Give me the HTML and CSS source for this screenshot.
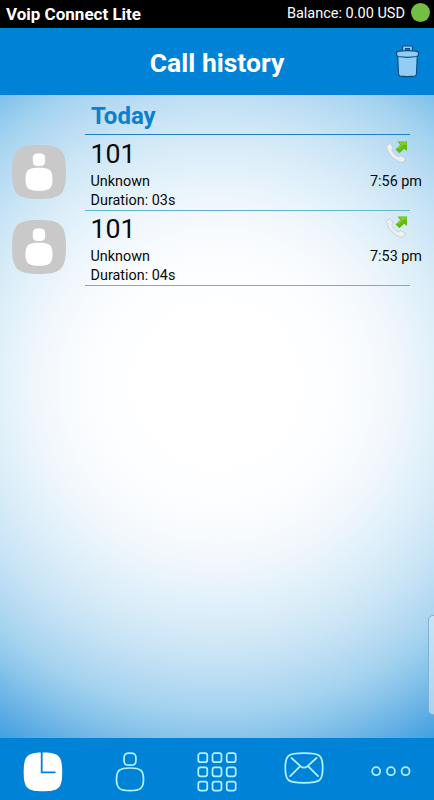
FILE: index.html
```html
<!DOCTYPE html>
<html lang="en">
<head>
<meta charset="UTF-8" />
<meta name="viewport" content="width=device-width, initial-scale=1" />
<title>Voip Connect Lite</title>
<link rel="stylesheet" href="styles.css">
</head>
<body>
  <div class="app">
    <div class="status-bar">
      <span class="app-name">Voip Connect Lite</span>
      <span class="balance">Balance: 0.00 USD</span>
      <span class="online-dot"></span>
    </div>

    <header class="header">
      <h1>Call history</h1>
      <button class="trash" aria-label="Clear history">
        <svg width="26" height="36" viewBox="0 0 26 36" fill="#93cdf5" stroke="#0b4f80" stroke-width="1.2">
          <path d="M2.700 11.500h19.600l-.8 18.500q-.1 1.900-1.800 2.200-7.200 1-14.400 0-1.700-.3-1.800-2.200z" />
          <path d="M7.500 7V3.400q0-1.400 1.400-1.400h7.200q1.400 0 1.400 1.400V7h-3V4.700h-4V7z" />
          <path d="M1.400 9.800q0-2.200 2.200-2.600 8.900-1.300 17.800 0 2.200.4 2.200 2.600 0 2.300-2 2.700-9.100 1.600-18.200 0-2-.4-2-2.700z" />
        </svg>
      </button>
    </header>

    <main class="history">
      <h2 class="day">Today</h2>

      <div class="call">
        <div class="avatar">
          <svg width="54" height="54" viewBox="0 0 54 54">
            <path fill="#c9c9c9" d="M27 0C48 0 54 4 54 27S48 54 27 54 0 50 0 27 6 0 27 0z" />
            <path fill="#fff" d="M27 8.500c5 0 6.200 1.200 6.200 6.200S32 21 27 21s-6.200-1.300-6.200-6.300S22 8.500 27 8.500zM27 22.700c10.500 0 13.500 2 13.500 11.500S37.500 45.700 27 45.700s-13.500-2-13.500-11.500S16.500 22.700 27 22.700z" />
          </svg>
        </div>
        <div class="info">
          <div class="details">
            <div class="number">101</div>
            <div class="name">Unknown</div>
            <div class="duration">Duration: 03s</div>
          </div>
          <div class="meta">
            <svg class="outgoing" width="24" height="24" viewBox="0 0 24 24">
              <path fill="#edf0f1" stroke="#b4bdc2" stroke-width=".6" d="M1.500 6.500q0-1.200 3-2.700 1-.4 1.500.6l2 3q.4 1-.4 1.600l-1 .8q2 4.700 6.600 7.200l1.700-1.200q.8-.6 1.600.1l3.600 2.300q.8.6.3 1.400-1.100 2.200-3 2.800-3.600.2-8-3.600Q2.600 14 1.500 6.500z" />
              <path fill="#62bb10" d="M12.500 1.500h9.500v9.500l-2.800-2.300-4.700 4.600-4-3.900 4.700-4.500z" />
              <path fill="#84d02e" d="M14.200 2.300h7v2.700l-3-.2-4.300 4.200-2-.4 4.500-4z" />
            </svg>
            <div class="time">7:56 pm</div>
          </div>
        </div>
      </div>

      <div class="call">
        <div class="avatar">
          <svg width="54" height="54" viewBox="0 0 54 54">
            <path fill="#c9c9c9" d="M27 0C48 0 54 4 54 27S48 54 27 54 0 50 0 27 6 0 27 0z" />
            <path fill="#fff" d="M27 8.500c5 0 6.200 1.200 6.200 6.200S32 21 27 21s-6.200-1.300-6.200-6.300S22 8.500 27 8.500zM27 22.700c10.500 0 13.500 2 13.500 11.500S37.500 45.700 27 45.700s-13.500-2-13.500-11.500S16.500 22.700 27 22.700z" />
          </svg>
        </div>
        <div class="info">
          <div class="details">
            <div class="number">101</div>
            <div class="name">Unknown</div>
            <div class="duration">Duration: 04s</div>
          </div>
          <div class="meta">
            <svg class="outgoing" width="24" height="24" viewBox="0 0 24 24">
              <path fill="#edf0f1" stroke="#b4bdc2" stroke-width=".6" d="M1.500 6.500q0-1.200 3-2.700 1-.4 1.500.6l2 3q.4 1-.4 1.600l-1 .8q2 4.700 6.600 7.200l1.700-1.200q.8-.6 1.600.1l3.600 2.300q.8.6.3 1.400-1.100 2.200-3 2.800-3.600.2-8-3.600Q2.600 14 1.500 6.500z" />
              <path fill="#62bb10" d="M12.500 1.500h9.500v9.500l-2.800-2.300-4.700 4.600-4-3.900 4.700-4.500z" />
              <path fill="#84d02e" d="M14.200 2.300h7v2.700l-3-.2-4.300 4.200-2-.4 4.500-4z" />
            </svg>
            <div class="time">7:53 pm</div>
          </div>
        </div>
      </div>

      <div class="edge-handle"></div>
    </main>

    <nav class="tabs">
      <button class="tab active" aria-label="History">
        <svg width="40" height="40" viewBox="0 0 40 40">
          <path fill="#fff" d="M20 .5C36 .5 39.200 4 39.200 20S36 39.300 20 39.300 .7 36 .7 20 4 .5 20 .5z" />
          <path fill="none" stroke="#0083d6" stroke-width="1.800" d="M18.700 0v20.300H32.500" />
        </svg>
      </button>
      <button class="tab" aria-label="Contacts">
        <svg width="40" height="40" viewBox="0 0 40 40">
          <path d="M20 1.200c5 0 6 1 6 6s-1 5.900-6 5.900-6-.9-6-5.900 1-6 6-6zM20 16c10.500 0 13.500 2.300 13.500 11.300S30.500 38.700 20 38.700 6.500 36.300 6.500 27.300 9.500 16 20 16z" />
        </svg>
      </button>
      <button class="tab" aria-label="Keypad">
        <svg width="40" height="40" viewBox="0 0 40 40">
          <rect x="1.300" y="1.200" width="9" height="9" rx="2.300" />
          <rect x="15.500" y="1.200" width="9" height="9" rx="2.300" />
          <rect x="29.700" y="1.200" width="9" height="9" rx="2.300" />
          <rect x="1.300" y="15.400" width="9" height="9" rx="2.300" />
          <rect x="15.500" y="15.400" width="9" height="9" rx="2.300" />
          <rect x="29.700" y="15.400" width="9" height="9" rx="2.300" />
          <rect x="1.300" y="29.600" width="9" height="9" rx="2.300" />
          <rect x="15.500" y="29.600" width="9" height="9" rx="2.300" />
          <rect x="29.700" y="29.600" width="9" height="9" rx="2.300" />
        </svg>
      </button>
      <button class="tab" aria-label="Messages">
        <svg width="40" height="40" viewBox="0 0 40 40">
          <path d="M20 1.200C36 1.200 38.700 3 38.700 16S36 30.800 20 30.800 1.300 29 1.300 16 4 1.200 20 1.200z" />
          <path d="M7.500 6l9.200 8.300q3.300 2.600 6.600 0L32.500 6M6.200 24.200l9.800-9.800M34 24.200l-9.800-9.800" />
        </svg>
      </button>
      <button class="tab" aria-label="More">
        <svg width="40" height="40" viewBox="0 0 40 40">
          <circle cx="5.200" cy="19.200" r="4" />
          <circle cx="19.900" cy="19.200" r="4" />
          <circle cx="34.600" cy="19.200" r="4" />
        </svg>
      </button>
    </nav>
  </div>
</body>
</html>
```
FILE: styles.css
```css
* {
  box-sizing: border-box;
}

body {
  margin: 0;
  font-family: Roboto, Arial, sans-serif;
  color: #0a0a0a;
}

h1, h2 {
  margin: 0;
}

button {
  padding: 0;
  border: none;
  background: none;
  cursor: pointer;
}

svg {
  display: block;
}

.app {
  display: flex;
  flex-direction: column;
  height: 100vh;
  overflow: hidden;
}

.status-bar {
  display: flex;
  align-items: center;
  height: 28px;
  padding: 0 4px 0 6px;
  background-color: #000;
  color: #fff;
}

.app-name {
  flex: 1;
  font-size: 17px;
  font-weight: bold;
}

.balance {
  font-size: 14.5px;
  padding-bottom: 2px;
}

.online-dot {
  width: 19px;
  height: 19px;
  margin: 0 0 3px 6px;
  border-radius: 50%;
  background-color: #72bf44;
}

.header {
  display: grid;
  grid-template-columns: 1fr auto 1fr;
  align-items: center;
  height: 67px;
  padding-right: 13px;
  padding-left: 13px;
  background-color: #0083d6;
  color: #fff;
}

.header h1 {
  grid-column: 2;
  font-size: 26.5px;
  line-height: 32px;
  padding-top: 3px;
}

.trash {
  justify-self: end;
}

.history {
  position: relative;
  flex: 1;
  background: radial-gradient(circle at 217px 290px, #fff 60px, #fdfeff 110px, #f8fbfe 150px, #eff6fc 185px, #e1f1fa 217px, #d7ebf7 242px, #cae5f6 268px, #b8dbf3 298px, #a4d3ef 325px, #86c3ea 355px, #64b0e5 385px, #42a0df 414px);
}

.day {
  height: 40px;
  margin: 0 24px 1px 85px;
  padding: 5px 0 0 6px;
  border-bottom: 1px solid #1583c4;
  color: #0c80cb;
  font-size: 24px;
  line-height: 32px;
}

.call {
  display: flex;
  height: 75px;
  padding: 0 24px 0 12px;
}

.avatar {
  width: 73px;
  padding-top: 9px;
}

.info {
  flex: 1;
  display: flex;
  justify-content: space-between;
  padding-left: 5.5px;
  border-bottom: 1px solid #5fb9cb;
}

.number {
  font-size: 26.7px;
  line-height: 32px;
  padding: 2px 0;
}

.name, .duration, .time {
  font-size: 14.4px;
  line-height: 20px;
  white-space: nowrap;
}

.duration {
  line-height: 18px;
}

.meta {
  display: flex;
  flex-direction: column;
  align-items: flex-end;
  padding-top: 4px;
  margin-right: -12px; /* time runs past the divider */
}

.outgoing {
  margin-right: 13px;
}

.time {
  padding-top: 8px;
}

.edge-handle {
  position: absolute;
  right: -6px;
  bottom: 23px;
  width: 12px;
  height: 100px;
  border: 1px solid #80b2d3;
  border-radius: 5px;
  background: linear-gradient(#c9e4f6, #a9d3f0);
}

.tabs {
  display: grid;
  grid-template-columns: repeat(5, 1fr);
  align-items: center;
  height: 62px;
  padding-top: 5px;
  background-color: #0083d6;
}

.tab svg {
  margin: 0 auto;
  fill: none;
  stroke: #b5f2ff;
  stroke-width: 1.7;
  stroke-linecap: round;
}

.tab.active svg {
  stroke: none;
  stroke-linecap: butt;
}
```
